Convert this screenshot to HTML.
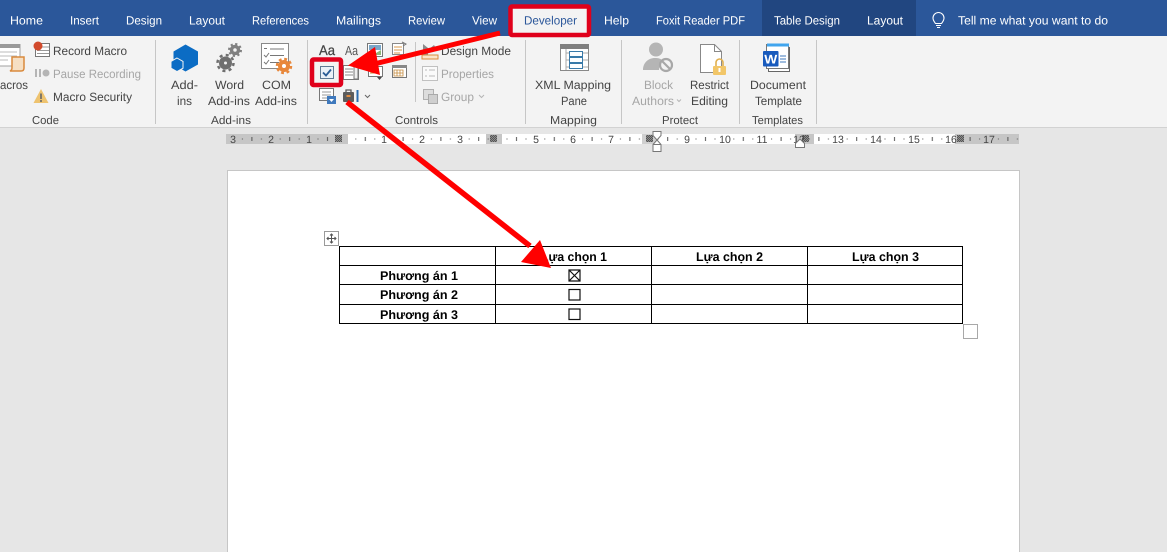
<!DOCTYPE html>
<html><head><meta charset="utf-8">
<style>
html,body{margin:0;padding:0;background:#e6e6e6;width:1167px;height:552px;overflow:hidden}
svg{display:block}
text{font-family:"Liberation Sans",sans-serif;font-size:12px;fill:#444;text-rendering:geometricPrecision}
.tab{fill:#fff;font-size:12px}
.gray{fill:#a6a6a6}
.lab{fill:#444;font-size:11.5px}
.tb{fill:#000;font-weight:bold;font-size:12.5px}
.rn{font-size:10.5px;fill:#444}
</style></head><body>
<svg width="1167" height="552" viewBox="0 0 1167 552" xmlns="http://www.w3.org/2000/svg">
<defs>
<pattern id="tk" x="346.3" y="134" width="37.8" height="10" patternUnits="userSpaceOnUse">
<rect x="9" y="4.5" width="1" height="1" fill="#555"/><rect x="18.500" y="3" width="1" height="4" fill="#555"/><rect x="28" y="4.500" width="1" height="1" fill="#555"/>
</pattern>
<pattern id="ht" x="0" y="0" width="2" height="2" patternUnits="userSpaceOnUse">
<rect width="2" height="2" fill="#8c8c8c"/><rect x="1" y="1" width="1" height="1" fill="#555"/><rect width="1" height="1" fill="#555"/>
</pattern>
</defs>
<!-- backgrounds -->
<rect width="1167" height="552" fill="#e6e6e6"/>
<rect width="1167" height="36" fill="#2b579a"/>
<rect x="762" width="154" height="36" fill="#214680"/>
<rect y="36" width="1167" height="91" fill="#f3f3f3"/>
<rect y="127" width="1167" height="1" fill="#d2d2d2"/>
<rect x="510" y="7" width="79" height="29" fill="#f3f3f3"/>
<!-- tabs -->
<text class="tab" x="10" y="24.5" textLength="33" lengthAdjust="spacingAndGlyphs">Home</text>
<text class="tab" x="70" y="24.5" textLength="29" lengthAdjust="spacingAndGlyphs">Insert</text>
<text class="tab" x="126" y="24.5" textLength="36" lengthAdjust="spacingAndGlyphs">Design</text>
<text class="tab" x="189" y="24.5" textLength="36" lengthAdjust="spacingAndGlyphs">Layout</text>
<text class="tab" x="252" y="24.5" textLength="57" lengthAdjust="spacingAndGlyphs">References</text>
<text class="tab" x="336" y="24.5" textLength="45" lengthAdjust="spacingAndGlyphs">Mailings</text>
<text class="tab" x="408" y="24.5" textLength="37" lengthAdjust="spacingAndGlyphs">Review</text>
<text class="tab" x="472" y="24.5" textLength="25" lengthAdjust="spacingAndGlyphs">View</text>
<text class="tab" x="524" y="24.5" textLength="53" lengthAdjust="spacingAndGlyphs" style="fill:#2b579a">Developer</text>
<text class="tab" x="604" y="24.5" textLength="25" lengthAdjust="spacingAndGlyphs">Help</text>
<text class="tab" x="656" y="24.5" textLength="89" lengthAdjust="spacingAndGlyphs">Foxit Reader PDF</text>
<text class="tab" x="774" y="24.5" textLength="66" lengthAdjust="spacingAndGlyphs">Table Design</text>
<text class="tab" x="867" y="24.5" textLength="36" lengthAdjust="spacingAndGlyphs">Layout</text>
<text class="tab" x="958" y="24.5" textLength="150" lengthAdjust="spacingAndGlyphs">Tell me what you want to do</text>
<path d="M935.5 23.5c-1-1.500-2.500-3-2.500-5.500a5.500 5.500 0 0 1 11 0c0 2.500-1.500 4-2.500 5.500zM936 25.500h5M937 27.500h3" fill="none" stroke="#fff" stroke-width="1.100"/>
<!-- separators -->
<path d="M155.500 40v84M307.500 40v84M415.500 42v60M525.500 40v84M621.500 40v84M739.500 40v84M816.500 40v84" stroke="#c6c6c6" stroke-width="1"/>
<!-- Code group -->
<rect x="-6" y="44.500" width="26" height="21.500" fill="#fff" stroke="#a0a0a0"/>
<rect x="-6" y="44" width="26" height="4" fill="#9a9a9a"/>
<path d="M-3 52h20M-3 56h20M-3 60h11" stroke="#bbb" stroke-width="1"/>
<path d="M12 57h12v11c0 2-1 3-3 3H10c2-1 2-2 2-4z" fill="#f6dfc3" stroke="#d98a3d" stroke-width="1.500"/>
<text x="0" y="89" textLength="28" lengthAdjust="spacingAndGlyphs">acros</text>
<rect x="35.500" y="43.500" width="14" height="13" fill="#fff" stroke="#777"/>
<path d="M41 47h8M37 50.500h12M37 53.500h12" stroke="#999"/>
<circle cx="38" cy="46" r="4.500" fill="#d24a2c"/>
<text x="53" y="55" textLength="74" lengthAdjust="spacingAndGlyphs">Record Macro</text>
<rect x="35" y="69" width="2" height="8" fill="#b5b5b5"/><rect x="39" y="69" width="2" height="8" fill="#b5b5b5"/><circle cx="46" cy="73" r="3.500" fill="#b5b5b5"/>
<text class="gray" x="53" y="78" textLength="88" lengthAdjust="spacingAndGlyphs">Pause Recording</text>
<path d="M41 89l7.500 14h-15z" fill="#eec36f"/>
<path d="M41 93.500v5.500M41 100v2" stroke="#666" stroke-width="1.600"/>
<text x="53" y="101" textLength="79" lengthAdjust="spacingAndGlyphs">Macro Security</text>
<text class="lab" x="32" y="124" textLength="27" lengthAdjust="spacingAndGlyphs">Code</text>
<!-- Add-ins -->
<path d="M185.500 44.500l12.500 7v13l-12.500 7-12-7v-13z" fill="#0b6cc4"/>
<path d="M177 58l6 3.400v6.800l-6 3.400-6-3.400v-6.800z" fill="#0b6cc4" stroke="#f3f3f3" stroke-width="1"/>
<text x="171" y="89" textLength="27" lengthAdjust="spacingAndGlyphs">Add-</text>
<text x="177" y="105" textLength="15" lengthAdjust="spacingAndGlyphs">ins</text>
<circle cx="235" cy="50" r="3.500" fill="none" stroke="#808080" stroke-width="3.500"/>
<circle cx="235" cy="50" r="6" fill="none" stroke="#808080" stroke-width="2" stroke-dasharray="2.200 2.510"/>
<circle cx="225.500" cy="63" r="4" fill="none" stroke="#6f6f6f" stroke-width="5"/>
<circle cx="225.500" cy="63" r="8" fill="none" stroke="#6f6f6f" stroke-width="2.500" stroke-dasharray="3 3.280"/>
<text x="215" y="89" textLength="29" lengthAdjust="spacingAndGlyphs">Word</text>
<text x="208" y="105" textLength="42" lengthAdjust="spacingAndGlyphs">Add-ins</text>
<rect x="261.500" y="43.500" width="27" height="25" fill="#fff" stroke="#888"/>
<path d="M264 48.500h3M270 49h14M264 55l2 2 3-4M270 55.500h14M264 62l2 2 3-4M270 62.500h9" fill="none" stroke="#777" stroke-width="1"/>
<circle cx="284" cy="66" r="4" fill="none" stroke="#e8873a" stroke-width="4"/>
<circle cx="284" cy="66" r="7" fill="none" stroke="#e8873a" stroke-width="2.500" stroke-dasharray="2.800 2.700"/>
<text x="262" y="89" textLength="29" lengthAdjust="spacingAndGlyphs">COM</text>
<text x="255" y="105" textLength="42" lengthAdjust="spacingAndGlyphs">Add-ins</text>
<text class="lab" x="211" y="124" textLength="40" lengthAdjust="spacingAndGlyphs">Add-ins</text>
<!-- Controls -->
<text x="319" y="55" textLength="16" lengthAdjust="spacingAndGlyphs" style="font-size:14px;fill:#444;stroke:#444;stroke-width:.25">Aa</text>
<text x="345" y="55" textLength="13" lengthAdjust="spacingAndGlyphs" style="font-size:13px;fill:#555">Aa</text>
<rect x="367.500" y="43.500" width="15" height="13" fill="#fff" stroke="#777"/><rect x="369" y="45" width="12" height="5" fill="#7aa7c9"/><path d="M369 55l4-4 3 2 5-3v5z" fill="#8fb77a"/>
<rect x="392.500" y="43.500" width="11" height="11" fill="#fff" stroke="#888"/><path d="M394 47h8M394 50h8M394 53h6" stroke="#d99a4d"/><path d="M402 42l4 2-3 2" fill="none" stroke="#777"/>
<rect x="320.500" y="66.500" width="13" height="12" fill="#eaf1f8" stroke="#5f7a94"/>
<path d="M323 72.500l3 3 5-6" fill="none" stroke="#2b5d96" stroke-width="1.800"/>
<rect x="343.500" y="65.500" width="15" height="14" fill="#fff" stroke="#777"/><path d="M345 69h8M345 72h8M345 75h8" stroke="#888"/><rect x="354" y="66" width="4" height="13" fill="#eee" stroke="#777"/>
<rect x="368.500" y="66.500" width="14" height="10" fill="#fff" stroke="#777"/><path d="M370 70h7M370 73h5" stroke="#c58a3c"/><path d="M377 77h5l-2.500 3z" fill="#444"/>
<rect x="392.500" y="66.500" width="14" height="11" fill="#fff" stroke="#777"/><rect x="392" y="65" width="15" height="3" fill="#888"/><path d="M394 70h9v6h-9zM397 70v6M400 70v6M394 73h9" fill="none" stroke="#c58a3c" stroke-width=".800"/>
<rect x="319.500" y="88.500" width="14" height="12" fill="#fff" stroke="#777"/><path d="M322 92h9M322 95h9M322 98h5" stroke="#999"/><rect x="327" y="96" width="9" height="8" fill="#3f79bd"/><path d="M329 99h5l-2.500 3z" fill="#fff"/>
<rect x="343" y="92" width="11" height="10" rx="1" fill="#5c5c5c"/><path d="M346 92v-2h5v2" fill="none" stroke="#5c5c5c" stroke-width="1.300"/><rect x="346.500" y="95" width="4" height="2" fill="#e08a3c"/><path d="M357.500 90v12" stroke="#2b6cb0" stroke-width="2"/>
<path d="M365 95l2.500 2.500 2.500-2.500" fill="none" stroke="#666"/>
<text class="lab" x="395" y="124" textLength="43" lengthAdjust="spacingAndGlyphs">Controls</text>
<path d="M423 44l5 4v7h-5zM428 50l6-5 3 5z" fill="#8a8a8a"/><rect x="422" y="55" width="16" height="4" fill="#fbe5c8" stroke="#d98a3d"/>
<text x="441" y="55" textLength="70" lengthAdjust="spacingAndGlyphs">Design Mode</text>
<rect x="422.500" y="66.500" width="15" height="14" fill="#fafafa" stroke="#c0c0c0"/><path d="M425 70h2M429 70h6M425 76h2M429 76h6" stroke="#bbb"/>
<text class="gray" x="441" y="78" textLength="53" lengthAdjust="spacingAndGlyphs">Properties</text>
<rect x="423.500" y="89.500" width="10" height="10" fill="#ddd" stroke="#b0b0b0"/><rect x="428.500" y="94.500" width="9" height="9" fill="#cfcfcf" stroke="#aaa"/>
<text class="gray" x="441" y="101" textLength="33" lengthAdjust="spacingAndGlyphs">Group</text>
<path d="M479 95l2.500 2.500 2.500-2.500" fill="none" stroke="#b5b5b5"/>
<!-- Mapping -->
<rect x="560.500" y="44.500" width="28" height="26" fill="#fff" stroke="#888"/><rect x="560" y="44" width="29" height="5" fill="#7f7f7f"/>
<path d="M566 49v21M566 53h22M566 60h22M566 67h22" stroke="#aaa"/>
<rect x="569.500" y="51.500" width="13" height="5" fill="#fff" stroke="#3a7aa8"/><rect x="569.500" y="57.500" width="13" height="5" fill="#fff" stroke="#3a7aa8"/><rect x="569.500" y="63.500" width="13" height="5" fill="#fff" stroke="#3a7aa8"/>
<text x="535" y="89" textLength="76" lengthAdjust="spacingAndGlyphs">XML Mapping</text>
<text x="561" y="105" textLength="26" lengthAdjust="spacingAndGlyphs">Pane</text>
<text class="lab" x="550" y="124" textLength="47" lengthAdjust="spacingAndGlyphs">Mapping</text>
<!-- Protect -->
<circle cx="656" cy="49.500" r="7" fill="#b5b5b5"/><path d="M643 70c0-7 5-12 12-12s8 3 8 5c-3 1-4 4-4 7z" fill="#b5b5b5"/>
<circle cx="666" cy="65" r="6" fill="#f3f3f3" stroke="#a8a8a8" stroke-width="2.200"/><path d="M662 61l8 8" stroke="#a8a8a8" stroke-width="2.200"/>
<text class="gray" x="644" y="89" textLength="29" lengthAdjust="spacingAndGlyphs">Block</text>
<text class="gray" x="632" y="105" textLength="42" lengthAdjust="spacingAndGlyphs">Authors</text>
<path d="M677 99.500l2 2 2-2" fill="none" stroke="#b5b5b5"/>
<path d="M700.500 44.500h14l7 7v21h-21z" fill="#fff" stroke="#888"/><path d="M714.500 44.500v7h7" fill="none" stroke="#888"/>
<path d="M716 66v-3.500a3.500 3.500 0 0 1 7 0V66" fill="none" stroke="#e0b050" stroke-width="1.600"/><rect x="713" y="66" width="13" height="9" rx="1" fill="#f2c668"/><rect x="718.500" y="68" width="2" height="4" fill="#fff"/>
<text x="690" y="89" textLength="39" lengthAdjust="spacingAndGlyphs">Restrict</text>
<text x="691" y="105" textLength="37" lengthAdjust="spacingAndGlyphs">Editing</text>
<text class="lab" x="662" y="124" textLength="36" lengthAdjust="spacingAndGlyphs">Protect</text>
<!-- Templates -->
<rect x="768.500" y="47.500" width="21" height="24" fill="#fff" stroke="#666"/>
<rect x="766.500" y="44.500" width="22" height="24" fill="#fff" stroke="#777"/>
<rect x="767" y="43.500" width="22" height="3" fill="#41a5ee"/>
<path d="M780 56h6M780 59h6M780 62h6" stroke="#3f79bd"/>
<rect x="763" y="51" width="15.500" height="15.500" rx="1" fill="#185abd"/>
<text x="764.300" y="63.500" textLength="13" lengthAdjust="spacingAndGlyphs" style="fill:#fff;font-weight:bold;font-size:12.500px">W</text>
<text x="750" y="89" textLength="56" lengthAdjust="spacingAndGlyphs">Document</text>
<text x="755" y="105" textLength="47" lengthAdjust="spacingAndGlyphs">Template</text>
<text class="lab" x="752" y="124" textLength="51" lengthAdjust="spacingAndGlyphs">Templates</text>
<!-- ruler -->
<rect x="226" y="134" width="793" height="10" fill="#c6c6c6"/>
<rect x="348" y="134" width="138" height="10" fill="#fff"/>
<rect x="488" y="134" width="14" height="10" fill="#c6c6c6"/>
<rect x="502" y="134" width="140" height="10" fill="#fff"/>
<rect x="642" y="134" width="16" height="10" fill="#d0d0d0"/>
<rect x="658" y="134" width="137" height="10" fill="#fff"/>
<rect x="795" y="134" width="17" height="10" fill="#c6c6c6"/>
<rect x="814" y="134" width="141" height="10" fill="#fff"/>
<rect x="226" y="134" width="793" height="10" fill="url(#tk)"/>
<rect x="335" y="135" width="7" height="7" fill="url(#ht)"/>
<rect x="490" y="135" width="7" height="7" fill="url(#ht)"/>
<rect x="646" y="135" width="7" height="7" fill="url(#ht)"/>
<rect x="802" y="135" width="7" height="7" fill="url(#ht)"/>
<rect x="957" y="135" width="7" height="7" fill="url(#ht)"/>
<g class="rn" text-anchor="middle">
<text class="rn" x="233" y="143">3</text><text class="rn" x="271" y="143">2</text><text class="rn" x="309" y="143">1</text>
<text class="rn" x="384" y="143">1</text><text class="rn" x="422" y="143">2</text><text class="rn" x="460" y="143">3</text>
<text class="rn" x="536" y="143">5</text><text class="rn" x="573" y="143">6</text><text class="rn" x="611" y="143">7</text>
<text class="rn" x="687" y="143">9</text><text class="rn" x="725" y="143">10</text><text class="rn" x="762" y="143">11</text><text class="rn" x="799" y="143">12</text>
<text class="rn" x="838" y="143">13</text><text class="rn" x="876" y="143">14</text><text class="rn" x="914" y="143">15</text><text class="rn" x="951" y="143">16</text><text class="rn" x="989" y="143">17</text>
</g>
<path d="M653 131.500h8v4l-4 4.500-4-4.500zM657 140l4 4.500v7h-8v-7z" fill="#fff" stroke="#777"/><path d="M653 144.500h8" stroke="#777"/>
<path d="M800 139l4.500 4.500v4h-9v-4z" fill="#fff" stroke="#777"/>
<!-- page -->
<rect x="227.500" y="170.500" width="792" height="390" fill="#fff" stroke="#c6c6c6"/>
<!-- table -->
<rect x="324.500" y="231.500" width="14" height="14" fill="#fff" stroke="#9a9a9a"/>
<path d="M331.500 234v9M327 238.500h9M330 235.500l1.500-1.500 1.500 1.500M330 241.500l1.500 1.500 1.500-1.500M328.500 237l-1.500 1.500 1.500 1.500M334.500 237l1.500 1.500-1.500 1.500" fill="none" stroke="#555"/>
<path d="M339.500 246.500h623v77h-623zM339.500 265.500h623M339.500 284.500h623M339.500 304.500h623M495.500 246.500v77M651.500 246.500v77M807.500 246.500v77" fill="none" stroke="#000" stroke-width="1"/>
<text class="tb" x="541" y="261" textLength="66" lengthAdjust="spacingAndGlyphs">Lựa chọn 1</text>
<text class="tb" x="696" y="261" textLength="67" lengthAdjust="spacingAndGlyphs">Lựa chọn 2</text>
<text class="tb" x="852" y="261" textLength="67" lengthAdjust="spacingAndGlyphs">Lựa chọn 3</text>
<text class="tb" x="380" y="280" textLength="78" lengthAdjust="spacingAndGlyphs">Phương án 1</text>
<text class="tb" x="380" y="299" textLength="78" lengthAdjust="spacingAndGlyphs">Phương án 2</text>
<text class="tb" x="380" y="319" textLength="78" lengthAdjust="spacingAndGlyphs">Phương án 3</text>
<path d="M569 270h11v11h-11zM569 270l11 11M580 270l-11 11" fill="none" stroke="#111" stroke-width="1.200"/>
<rect x="569" y="289.500" width="11" height="10.500" fill="none" stroke="#111" stroke-width="1.200"/>
<rect x="569" y="309" width="11" height="10.500" fill="none" stroke="#111" stroke-width="1.200"/>
<rect x="963.500" y="324.500" width="14" height="14" fill="#fff" stroke="#a8a8a8"/>
<!-- annotations -->
<rect x="510.500" y="6.500" width="78.500" height="28.500" rx="1.500" fill="none" stroke="#e0001b" stroke-width="4.500"/>
<rect x="312" y="59.500" width="29" height="25.500" rx="1.500" fill="none" stroke="#e0001b" stroke-width="4.500"/>
<path d="M500 33L370 65" stroke="#f00" stroke-width="5"/>
<path d="M348 65.500L375 47L380 75z" fill="#f00"/>
<path d="M347 102L530 246" stroke="#f00" stroke-width="5.500"/>
<path d="M551 268L521 262L540 240z" fill="#f00"/>
</svg>
</body></html>
